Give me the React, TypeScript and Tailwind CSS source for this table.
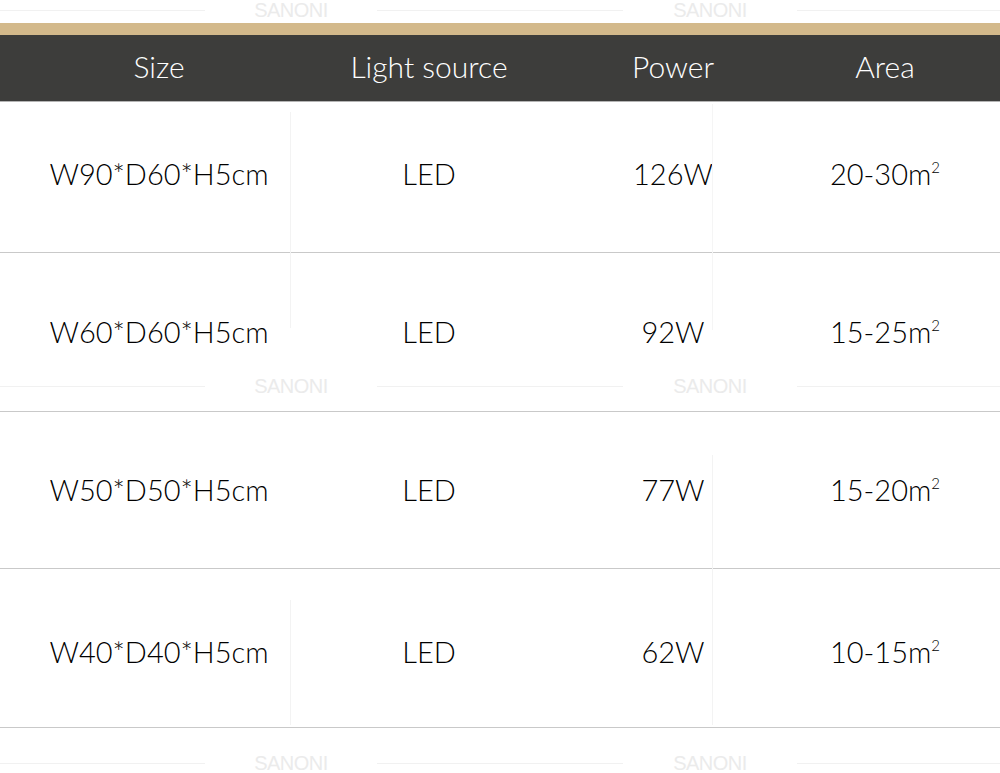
import React from "react";

const rows = [
  { size: "W90*D60*H5cm", power: "126W", area: "20-30m", h: "h-[151px]", pad: "pb-[7px]" },
  { size: "W60*D60*H5cm", power: "92W", area: "15-25m", h: "h-[159px]", pad: "pb-[0px]" },
  { size: "W50*D50*H5cm", power: "77W", area: "15-20m", h: "h-[157px]", pad: "pb-[0px]" },
  { size: "W40*D40*H5cm", power: "62W", area: "10-15m", h: "h-[159px]", pad: "pt-[8px]" },
];

const cols = "grid grid-cols-[318px_222px_266px_158px] items-center";

// faint "SANONI" watermark strip
const Watermark: React.FC<{ top: string }> = ({ top }) => (
  <div className={`absolute left-0 right-0 ${top} h-[20px] flex items-center pointer-events-none`} aria-hidden="true">
    <div className="w-[205px] h-px bg-[#f1f1f1]" />
    <span className="w-[172px] text-center text-[20px] leading-[20px] text-[#ebebeb] font-['Liberation_Sans',sans-serif] tracking-tight">
      SANONI
    </span>
    <div className="w-[246px] h-px bg-[#f1f1f1]" />
    <span className="w-[174px] text-center text-[20px] leading-[20px] text-[#ebebeb] font-['Liberation_Sans',sans-serif] tracking-tight">
      SANONI
    </span>
    <div className="flex-1 h-px bg-[#f1f1f1]" />
  </div>
);

export default function App() {
  return (
    <div className="relative w-[1000px] h-[773px] bg-white overflow-hidden font-['Lato',sans-serif] font-light">
      <div className="h-[23px]" />
      <div className="h-[12px] bg-[#d3b98b]" />

      {/* Header */}
      <div className={`${cols} h-[67px] pb-[3px] bg-[#3d3d3b] border-b border-[#b4b4b4] text-white text-[30px]`}>
        <div className="text-center">Size</div>
        <div className="text-center">Light source</div>
        <div className="text-center">Power</div>
        <div className="text-center">Area</div>
      </div>

      {/* Body rows */}
      {rows.map((r) => (
        <div key={r.size} className={`${cols} ${r.h} ${r.pad} border-b border-[#c9c9c9] text-black text-[29px]`}>
          <div className="text-center">{r.size}</div>
          <div className="text-center">LED</div>
          <div className="text-center">{r.power}</div>
          <div className="text-center">
            {r.area}
            <span className="relative -top-[12px] text-[15px]">2</span>
          </div>
        </div>
      ))}

      {/* Watermark traces */}
      <Watermark top="top-[0px]" />
      <Watermark top="top-[376px]" />
      <Watermark top="top-[753px]" />
      <div className="absolute left-[290px] top-[112px] w-px h-[216px] bg-[#f3f3f3]" aria-hidden="true" />
      <div className="absolute left-[290px] top-[600px] w-px h-[125px] bg-[#f3f3f3]" aria-hidden="true" />
      <div className="absolute left-[712px] top-[104px] w-px h-[226px] bg-[#f5f5f5]" aria-hidden="true" />
      <div className="absolute left-[712px] top-[455px] w-px h-[270px] bg-[#f3f3f3]" aria-hidden="true" />
    </div>
  );
}
